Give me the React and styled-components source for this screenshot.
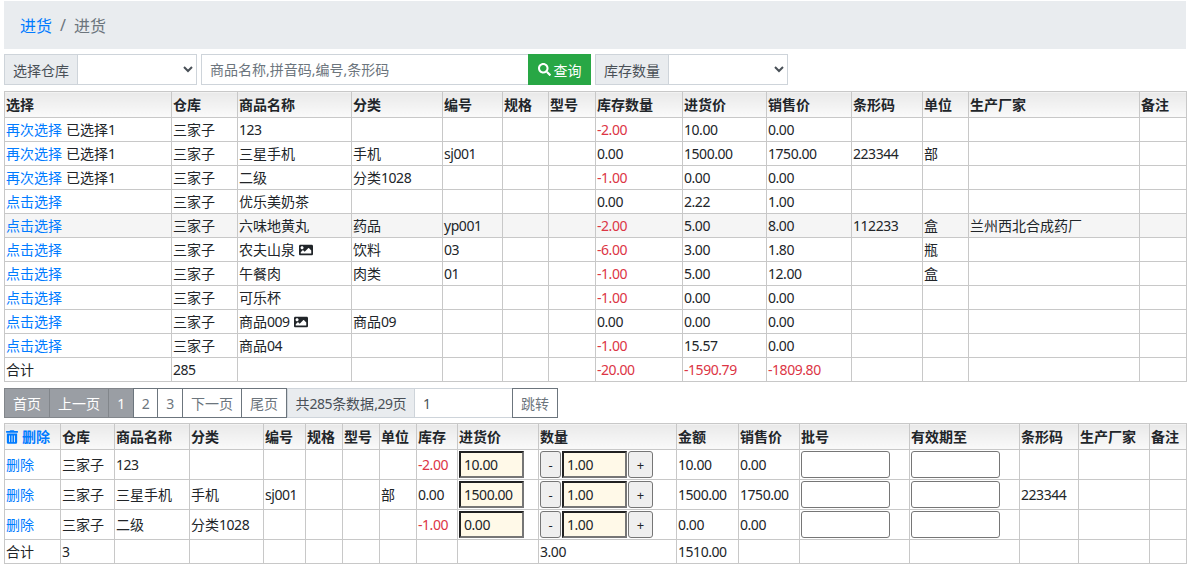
import React from "react";
import styled, { createGlobalStyle } from "styled-components";
import { FaImage, FaSearch, FaTrashAlt } from "react-icons/fa";

const STACK = '"Noto Sans", "Noto Sans CJK SC", sans-serif';

const Global = createGlobalStyle`
  * { box-sizing: border-box; }
  html, body { margin: 0; background: #fff; }
  body { font-family: ${STACK}; font-size: 14px; color: #212529; }
`;

const Page = styled.div`
  width: 1188px;
  height: 570px;
  overflow: hidden;
  padding: 1px 2px 0 4px;
`;
const Breadcrumb = styled.nav`
  display: flex;
  align-items: center;
  height: 48px;
  padding: 0 16px;
  background: #e9ecef;
  font-size: 16px;
  margin-bottom: 5px;
  color: #6c757d;
`;
const Crumb = styled.a`
  color: #007bff;
`;
const Slash = styled.span`
  padding: 0 8px;
`;
const Toolbar = styled.div`
  display: flex;
  gap: 4px;
  height: 31px;
  margin-bottom: 6px;
`;
const Group = styled.div`
  display: flex;
  width: ${(p) => p.$w}px;
`;
const Addon = styled.span`
  display: flex;
  align-items: center;
  justify-content: center;
  width: 74px;
  flex: none;
  background: #e9ecef;
  border: 1px solid #ced4da;
  color: #495057;
  font-size: 14px;
`;
const Select = styled.select`
  flex: 1;
  min-width: 0;
  height: 31px;
  margin-left: -1px;
  background: #fff;
  border: 1px solid #ced4da;
  border-radius: 0;
  color: #495057;
  font-size: 14px;
  outline: none;
`;
const SearchInput = styled.input`
  flex: 1;
  min-width: 0;
  height: 31px;
  padding: 0 8px;
  border: 1px solid #ced4da;
  border-right: 0;
  font-family: ${STACK};
  font-size: 14px;
  &::placeholder { color: #6c757d; opacity: 1; }
`;
const SearchBtn = styled.button`
  display: flex;
  align-items: center;
  justify-content: center;
  gap: 3px;
  width: 63px;
  flex: none;
  padding: 0;
  border: 0;
  background: #28a745;
  color: #fff;
  font-family: ${STACK};
  font-size: 14px;
`;
const Table = styled.table`
  width: 1182px;
  table-layout: fixed;
  border-collapse: collapse;
  line-height: 20px;
`;
const Col = styled.col`
  width: ${(p) => p.$w}px;
`;
const Th = styled.th`
  height: 26px;
  padding: 0 1px;
  border: 1px solid #c8c8c8;
  background: linear-gradient(#e9e9e9, #fafafa);
  color: #212529;
  font-size: 14px;
  font-weight: 700;
  text-align: left;
  white-space: nowrap;
  overflow: hidden;
`;
const Td = styled.td`
  height: ${(p) => p.$h}px;
  padding: 0 1px;
  border: 1px solid #c8c8c8;
  color: ${(p) => (p.$red ? "#dc3545" : "#212529")};
  font-size: 14px;
  white-space: nowrap;
  overflow: hidden;
`;
const Tr = styled.tr`
  background: ${(p) => (p.$hover ? "#f5f5f5" : "#fff")};
`;
const Latin = styled.span`
  letter-spacing: -0.45px;
`;
const Link = styled.a`
  color: #007bff;
`;
const Picked = styled.span`
  margin-left: 4px;
`;
const PicIcon = styled(FaImage)`
  width: 14px;
  height: 14px;
  margin-left: 4px;
  vertical-align: -2px;
  color: #212529;
`;
const TrashIcon = styled(FaTrashAlt)`
  width: 12px;
  height: 14px;
  margin-right: 4px;
  vertical-align: -2px;
  color: #007bff;
`;
const Pager = styled.div`
  display: flex;
  height: 30px;
  margin: 6px 0 5px;
`;
const PageBtn = styled.button`
  width: ${(p) => p.$w}px;
  flex: none;
  margin-left: ${(p) => (p.$first ? 0 : "-1px")};
  padding: 0;
  border: 1px solid ${(p) => (p.$off ? "#82868b" : "#6c757d")};
  background: ${(p) => (p.$off ? "#9a9ea4" : "#fff")};
  color: ${(p) => (p.$off ? "#fff" : "#6c757d")};
  font-family: ${STACK};
  font-size: 14px;
`;
const PageInfo = styled.span`
  display: flex;
  align-items: center;
  justify-content: center;
  width: 128px;
  flex: none;
  background: #e9ecef;
  border: 1px solid #ced4da;
  color: #495057;
`;
const PageInput = styled.input`
  width: 99px;
  flex: none;
  margin-left: -1px;
  padding: 0 8px;
  border: 1px solid #ced4da;
  color: #495057;
  font-family: ${STACK};
  font-size: 14px;
  outline: none;
`;
const PriceInput = styled.input`
  display: block;
  width: ${(p) => p.$w}px;
  height: 27px;
  padding: 0 2px 0 3px;
  border: 2px inset #767676;
  border-radius: 0;
  background: #fff9e8;
  color: #212529;
  font-family: ${STACK};
  font-size: 14px;
  letter-spacing: -0.45px;
  outline: none;
`;
const QtyWrap = styled.div`
  display: flex;
  align-items: center;
  gap: 1px;
`;
const StepBtn = styled.button`
  width: ${(p) => p.$w}px;
  height: 27px;
  flex: none;
  padding: 0;
  background: #efefef;
  border: 1px solid #767676;
  border-radius: 3px;
  color: #212529;
  font-family: ${STACK};
  font-size: 13px;
`;
const BatchInput = styled.input`
  display: block;
  width: 89px;
  height: 27px;
  padding: 0 2px;
  background: #fff;
  border: 1px solid #767676;
  border-radius: 3px;
  outline: none;
`;

const T = ({ children }) =>
  String(children)
    .split(/([\x00-\x7f]+)/)
    .filter(Boolean)
    .map((part, i) => (/^[\x00-\x7f]/.test(part) ? <Latin key={i}>{part}</Latin> : part));

const topCols = [167, 66, 114, 91, 60, 46, 47, 87, 84, 85, 71, 46, 171, 47];
const topHead = ["选择", "仓库", "商品名称", "分类", "编号", "规格", "型号", "库存数量", "进货价", "销售价", "条形码", "单位", "生产厂家", "备注"];
const topRows = [
  { again: 1, name: "123", stock: "-2.00", buy: "10.00", sell: "0.00" },
  { again: 1, name: "三星手机", cat: "手机", code: "sj001", stock: "0.00", buy: "1500.00", sell: "1750.00", bar: "223344", unit: "部" },
  { again: 1, name: "二级", cat: "分类1028", stock: "-1.00", buy: "0.00", sell: "0.00" },
  { name: "优乐美奶茶", stock: "0.00", buy: "2.22", sell: "1.00" },
  { name: "六味地黄丸", cat: "药品", code: "yp001", stock: "-2.00", buy: "5.00", sell: "8.00", bar: "112233", unit: "盒", maker: "兰州西北合成药厂", hover: 1 },
  { name: "农夫山泉", pic: 1, cat: "饮料", code: "03", stock: "-6.00", buy: "3.00", sell: "1.80", unit: "瓶" },
  { name: "午餐肉", cat: "肉类", code: "01", stock: "-1.00", buy: "5.00", sell: "12.00", unit: "盒" },
  { name: "可乐杯", stock: "-1.00", buy: "0.00", sell: "0.00" },
  { name: "商品009", pic: 1, cat: "商品09", stock: "0.00", buy: "0.00", sell: "0.00" },
  { name: "商品04", stock: "-1.00", buy: "15.57", sell: "0.00" },
];
const botCols = [56, 54, 75, 74, 42, 37, 37, 37, 41, 81, 138, 62, 61, 110, 110, 59, 71, 37];
const botHead = ["仓库", "商品名称", "分类", "编号", "规格", "型号", "单位", "库存", "进货价", "数量", "金额", "销售价", "批号", "有效期至", "条形码", "生产厂家", "备注"];
const botRows = [
  { name: "123", stock: "-2.00", buy: "10.00", amt: "10.00", sell: "0.00" },
  { name: "三星手机", cat: "手机", code: "sj001", unit: "部", stock: "0.00", buy: "1500.00", amt: "1500.00", sell: "1750.00", bar: "223344" },
  { name: "二级", cat: "分类1028", stock: "-1.00", buy: "0.00", amt: "0.00", sell: "0.00" },
];

const isNeg = (s) => s.startsWith("-");

export default function App() {
  return (
    <Page>
      <Global />
      <Breadcrumb>
        <Crumb>进货</Crumb>
        <Slash>/</Slash>
        <span>进货</span>
      </Breadcrumb>
      <Toolbar>
        <Group $w={193}>
          <Addon>选择仓库</Addon>
          <Select />
        </Group>
        <Group $w={390}>
          <SearchInput placeholder="商品名称,拼音码,编号,条形码" readOnly />
          <SearchBtn>
            <FaSearch size={13} />
            查询
          </SearchBtn>
        </Group>
        <Group $w={193}>
          <Addon>库存数量</Addon>
          <Select />
        </Group>
      </Toolbar>

      <Table>
        <colgroup>
          {topCols.map((w, i) => <Col key={i} $w={w} />)}
        </colgroup>
        <thead>
          <tr>{topHead.map((h) => <Th key={h}>{h}</Th>)}</tr>
        </thead>
        <tbody>
          {topRows.map((r, i) => (
            <Tr key={i} $hover={r.hover}>
              <Td $h={24}>
                <Link>{r.again ? "再次选择" : "点击选择"}</Link>
                {r.again ? <Picked>已选择<Latin>1</Latin></Picked> : null}
              </Td>
              <Td $h={24}>三家子</Td>
              <Td $h={24}><T>{r.name}</T>{r.pic ? <PicIcon /> : null}</Td>
              <Td $h={24}><T>{r.cat || ""}</T></Td>
              <Td $h={24}><T>{r.code || ""}</T></Td>
              <Td $h={24} />
              <Td $h={24} />
              <Td $h={24} $red={isNeg(r.stock)}><T>{r.stock}</T></Td>
              <Td $h={24}><T>{r.buy}</T></Td>
              <Td $h={24}><T>{r.sell}</T></Td>
              <Td $h={24}><T>{r.bar || ""}</T></Td>
              <Td $h={24}>{r.unit}</Td>
              <Td $h={24}>{r.maker}</Td>
              <Td $h={24} />
            </Tr>
          ))}
          <Tr>
            <Td $h={24}>合计</Td>
            <Td $h={24}><T>285</T></Td>
            <Td $h={24} /><Td $h={24} /><Td $h={24} /><Td $h={24} /><Td $h={24} />
            <Td $h={24} $red><T>-20.00</T></Td>
            <Td $h={24} $red><T>-1590.79</T></Td>
            <Td $h={24} $red><T>-1809.80</T></Td>
            <Td $h={24} /><Td $h={24} /><Td $h={24} /><Td $h={24} />
          </Tr>
        </tbody>
      </Table>

      <Pager>
        <PageBtn $first $off $w={46}>首页</PageBtn>
        <PageBtn $off $w={60}>上一页</PageBtn>
        <PageBtn $off $w={26}><Latin>1</Latin></PageBtn>
        <PageBtn $w={25}><Latin>2</Latin></PageBtn>
        <PageBtn $w={26}><Latin>3</Latin></PageBtn>
        <PageBtn $w={60}>下一页</PageBtn>
        <PageBtn $w={46}>尾页</PageBtn>
        <PageInfo><span>共<Latin>285</Latin>条数据<Latin>,29</Latin>页</span></PageInfo>
        <PageInput defaultValue="1" />
        <PageBtn $w={46}>跳转</PageBtn>
      </Pager>

      <Table>
        <colgroup>
          {botCols.map((w, i) => <Col key={i} $w={w} />)}
        </colgroup>
        <thead>
          <tr>
            <Th><Link><TrashIcon />删除</Link></Th>
            {botHead.map((h, i) => <Th key={i}>{h}</Th>)}
          </tr>
        </thead>
        <tbody>
          {botRows.map((r, i) => (
            <Tr key={i}>
              <Td $h={30}><Link>删除</Link></Td>
              <Td $h={30}>三家子</Td>
              <Td $h={30}><T>{r.name}</T></Td>
              <Td $h={30}><T>{r.cat || ""}</T></Td>
              <Td $h={30}><T>{r.code || ""}</T></Td>
              <Td $h={30} />
              <Td $h={30} />
              <Td $h={30}>{r.unit}</Td>
              <Td $h={30} $red={isNeg(r.stock)}><T>{r.stock}</T></Td>
              <Td $h={30}><PriceInput $w={65} defaultValue={r.buy} /></Td>
              <Td $h={30}>
                <QtyWrap>
                  <StepBtn $w={21}>-</StepBtn>
                  <PriceInput $w={65} defaultValue="1.00" />
                  <StepBtn $w={25}>+</StepBtn>
                </QtyWrap>
              </Td>
              <Td $h={30}><T>{r.amt}</T></Td>
              <Td $h={30}><T>{r.sell}</T></Td>
              <Td $h={30}><BatchInput /></Td>
              <Td $h={30}><BatchInput /></Td>
              <Td $h={30}><T>{r.bar || ""}</T></Td>
              <Td $h={30} />
              <Td $h={30} />
            </Tr>
          ))}
          <Tr>
            <Td $h={24}>合计</Td>
            <Td $h={24}><T>3</T></Td>
            <Td $h={24} /><Td $h={24} /><Td $h={24} /><Td $h={24} /><Td $h={24} /><Td $h={24} /><Td $h={24} /><Td $h={24} />
            <Td $h={24}><T>3.00</T></Td>
            <Td $h={24}><T>1510.00</T></Td>
            <Td $h={24} /><Td $h={24} /><Td $h={24} /><Td $h={24} /><Td $h={24} /><Td $h={24} />
          </Tr>
        </tbody>
      </Table>
    </Page>
  );
}
